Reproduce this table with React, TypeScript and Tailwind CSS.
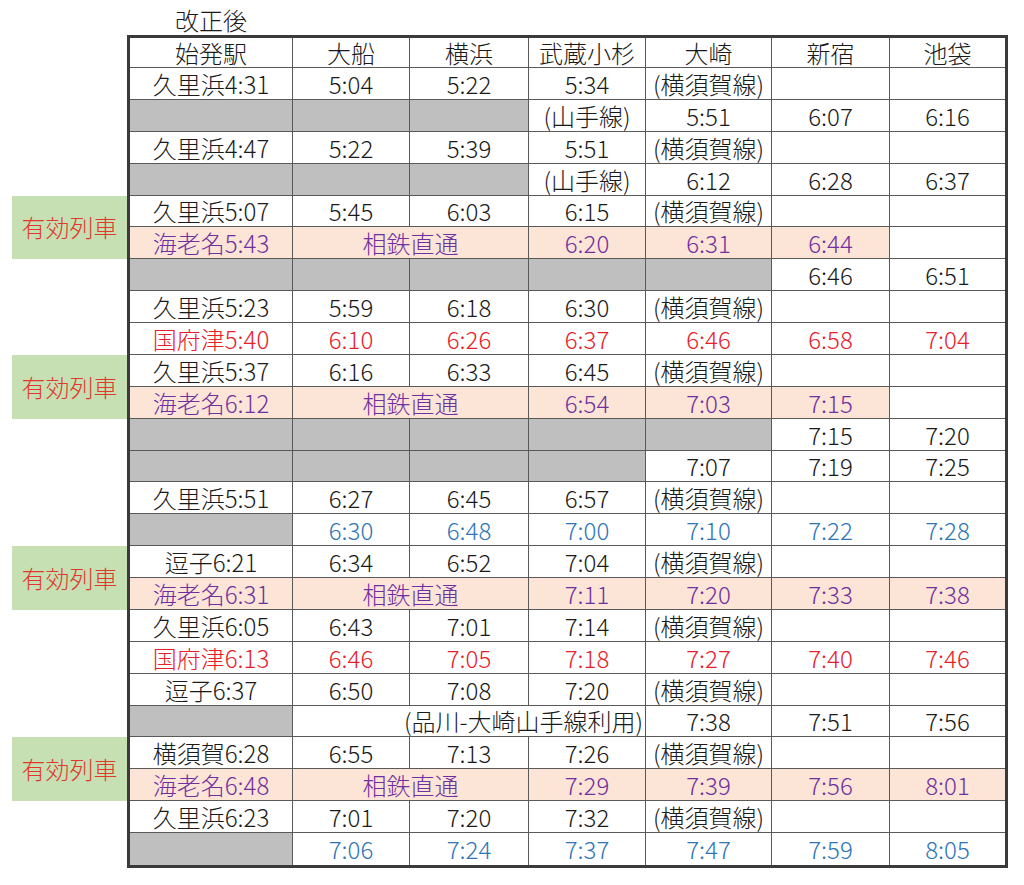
type Cell = {
  t?: string;
  span?: number;
  bg?: "g" | "p";
  c?: "r" | "b" | "v";
  right?: boolean;
};

const g: Cell = { bg: "g" };
const e: Cell = {};

// normal Yokosuka line row
const yk = (a: string, b: string, c: string, d: string): Cell[] => [
  { t: a },
  { t: b },
  { t: c },
  { t: d },
  { t: "(横須賀線)" },
  e,
  e,
];

const red = (cells: string[]): Cell[] => cells.map((t) => ({ t, c: "r" }));

const blue = (cells: string[]): Cell[] => [g, ...cells.map((t) => ({ t, c: "b" as const }))];

// Sotetsu through train row
const sotetsu = (first: string, rest: string[]): Cell[] => [
  { t: first, bg: "p", c: "v" },
  { t: "相鉄直通", span: 2, bg: "p", c: "v" },
  ...rest.map((t) => (t ? { t, bg: "p" as const, c: "v" as const } : e)),
];

const header = ["始発駅", "大船", "横浜", "武蔵小杉", "大崎", "新宿", "池袋"];

const rows: Cell[][] = [
  yk("久里浜4:31", "5:04", "5:22", "5:34"),
  [g, g, g, { t: "(山手線)" }, { t: "5:51" }, { t: "6:07" }, { t: "6:16" }],
  yk("久里浜4:47", "5:22", "5:39", "5:51"),
  [g, g, g, { t: "(山手線)" }, { t: "6:12" }, { t: "6:28" }, { t: "6:37" }],
  yk("久里浜5:07", "5:45", "6:03", "6:15"),
  sotetsu("海老名5:43", ["6:20", "6:31", "6:44", ""]),
  [g, g, g, g, g, { t: "6:46" }, { t: "6:51" }],
  yk("久里浜5:23", "5:59", "6:18", "6:30"),
  red(["国府津5:40", "6:10", "6:26", "6:37", "6:46", "6:58", "7:04"]),
  yk("久里浜5:37", "6:16", "6:33", "6:45"),
  sotetsu("海老名6:12", ["6:54", "7:03", "7:15", ""]),
  [g, g, g, g, g, { t: "7:15" }, { t: "7:20" }],
  [g, g, g, g, { t: "7:07" }, { t: "7:19" }, { t: "7:25" }],
  yk("久里浜5:51", "6:27", "6:45", "6:57"),
  blue(["6:30", "6:48", "7:00", "7:10", "7:22", "7:28"]),
  yk("逗子6:21", "6:34", "6:52", "7:04"),
  sotetsu("海老名6:31", ["7:11", "7:20", "7:33", "7:38"]),
  yk("久里浜6:05", "6:43", "7:01", "7:14"),
  red(["国府津6:13", "6:46", "7:05", "7:18", "7:27", "7:40", "7:46"]),
  yk("逗子6:37", "6:50", "7:08", "7:20"),
  [g, { t: "(品川-大崎山手線利用)", span: 3, right: true }, { t: "7:38" }, { t: "7:51" }, { t: "7:56" }],
  yk("横須賀6:28", "6:55", "7:13", "7:26"),
  sotetsu("海老名6:48", ["7:29", "7:39", "7:56", "8:01"]),
  yk("久里浜6:23", "7:01", "7:20", "7:32"),
  blue(["7:06", "7:24", "7:37", "7:47", "7:59", "8:05"]),
];

const spanClass: Record<number, string> = { 1: "", 2: "col-span-2", 3: "col-span-3" };
const bgClass = { g: "bg-[#bfbfbf]", p: "bg-[#fce4d6]" };
const colorClass = { r: "text-[#e8202a]", b: "text-[#2e75b6]", v: "text-[#7030a0]" };

function Row({ cells, last }: { cells: Cell[]; last: boolean }) {
  let col = 0;
  return (
    <>
      {cells.map((cell, i) => {
        const span = cell.span ?? 1;
        col += span;
        const isLastCol = col === 7;
        return (
          <div
            key={i}
            className={[
              "flex items-center whitespace-nowrap border-[#595959] pt-[1px]",
              spanClass[span],
              cell.right ? "justify-end pr-[2px]" : "justify-center",
              isLastCol ? "" : "border-r",
              last ? "" : "border-b",
              cell.bg ? bgClass[cell.bg] : "bg-white",
              cell.c ? colorClass[cell.c] : "text-[#1a1a1a]",
            ].join(" ")}
          >
            {cell.t}
          </div>
        );
      })}
    </>
  );
}

function Label({ rowClass }: { rowClass: string }) {
  return (
    <div
      className={`${rowClass} row-span-2 flex items-center justify-center bg-[#c6e0b4] text-[#e0392c]`}
    >
      有効列車
    </div>
  );
}

export default function App() {
  return (
    <div className="w-[1024px] h-[885px] bg-white font-['Noto_Sans_CJK_JP','Noto_Sans',sans-serif] text-[24px] font-light leading-none">
      {/* Title */}
      <div className="flex h-[35px] items-center pt-[4px]">
        <div className="w-[130px]" />
        <div className="w-[162px] text-center text-[#1a1a1a]">改正後</div>
      </div>

      <div className="flex">
        {/* Left labels */}
        <div className="grid w-[127px] grid-rows-[3px_30px_repeat(25,31.88px)] pl-[12px]">
          <Label rowClass="row-start-7" />
          <Label rowClass="row-start-12" />
          <Label rowClass="row-start-18" />
          <Label rowClass="row-start-24" />
        </div>

        {/* Timetable */}
        <div className="border-[3px] border-[#3a3a3a]">
          <div className="grid grid-cols-[163px_117px_119px_117px_126px_118px_115px] grid-rows-[30px_repeat(25,31.88px)]">
            <Row cells={header.map((t) => ({ t }))} last={false} />
            {rows.map((r, i) => (
              <Row key={i} cells={r} last={i === rows.length - 1} />
            ))}
          </div>
        </div>
      </div>
    </div>
  );
}
